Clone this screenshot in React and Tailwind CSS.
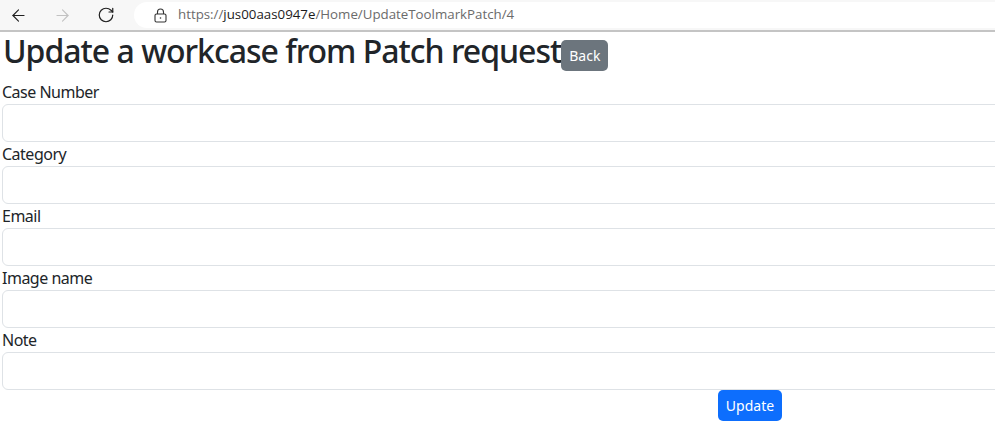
import { ArrowLeft, ArrowRight, RotateCw } from "lucide-react";

const fields = ["Case Number", "Category", "Email", "Image name", "Note"];

function Toolbar() {
  return (
    <div className="h-[32px] bg-[#f7f7f7] border-b-2 border-[#c4c4c4] flex items-center font-['Open_Sans',sans-serif]">
      <div className="w-[134px] flex items-center shrink-0">
        <ArrowLeft className="ml-[9px] w-[19px] h-[19px] text-[#1f1f1f]" strokeWidth={1.4} />
        <ArrowRight className="ml-[25px] w-[19px] h-[19px] text-[#c2c2c2]" strokeWidth={1.4} />
        <RotateCw className="ml-[25px] w-[18px] h-[18px] text-[#1f1f1f]" strokeWidth={1.6} />
      </div>
      <div className="flex-1 h-[26px] bg-white rounded-l-full flex items-center">
        <svg className="ml-[20px] w-[13px] h-[15px]" viewBox="0 0 13 15" fill="none" stroke="#333" strokeWidth="1.1">
          <rect x="1" y="6" width="11" height="8" rx="1.5" />
          <path d="M3.5 6V4a3 3 0 0 1 6 0v2" />
          <circle cx="6.5" cy="10" r="0.8" fill="#333" stroke="none" />
        </svg>
        <span className="ml-[11px] text-[13.3px] text-[#6b6b6b]">
          https://<span className="text-[#1b1b1b]">jus00aas0947e</span>/Home/UpdateToolmarkPatch/4
        </span>
      </div>
    </div>
  );
}

export default function App() {
  return (
    <div className="w-[995px] h-[447px] overflow-hidden bg-white">
      <Toolbar />
      <div className="w-[1498px] pl-[2px] font-['Noto_Sans',sans-serif] text-[#212529]">
        <div className="flex items-start h-[48px]">
          <h1 className="text-[32px] leading-[38px] font-medium tracking-[-1px] pl-[1px]">Update a workcase from Patch request</h1>
          <button className="mt-[8px] px-[8px] h-[31px] rounded-[5px] bg-[#6c757d] text-white text-[14px]">Back</button>
        </div>
        {fields.map((f) => (
          <div key={f}>
            <label className="block h-[24px] text-[16px] leading-[24px] tracking-[-0.5px]">{f}</label>
            <input className="block w-full h-[38px] border border-[#dee2e6] rounded-[6px]" />
          </div>
        ))}
        <div className="flex justify-center">
          <button className="px-[8px] h-[31px] rounded-[5px] bg-[#0d6efd] text-white text-[14px]">Update</button>
        </div>
      </div>
    </div>
  );
}
